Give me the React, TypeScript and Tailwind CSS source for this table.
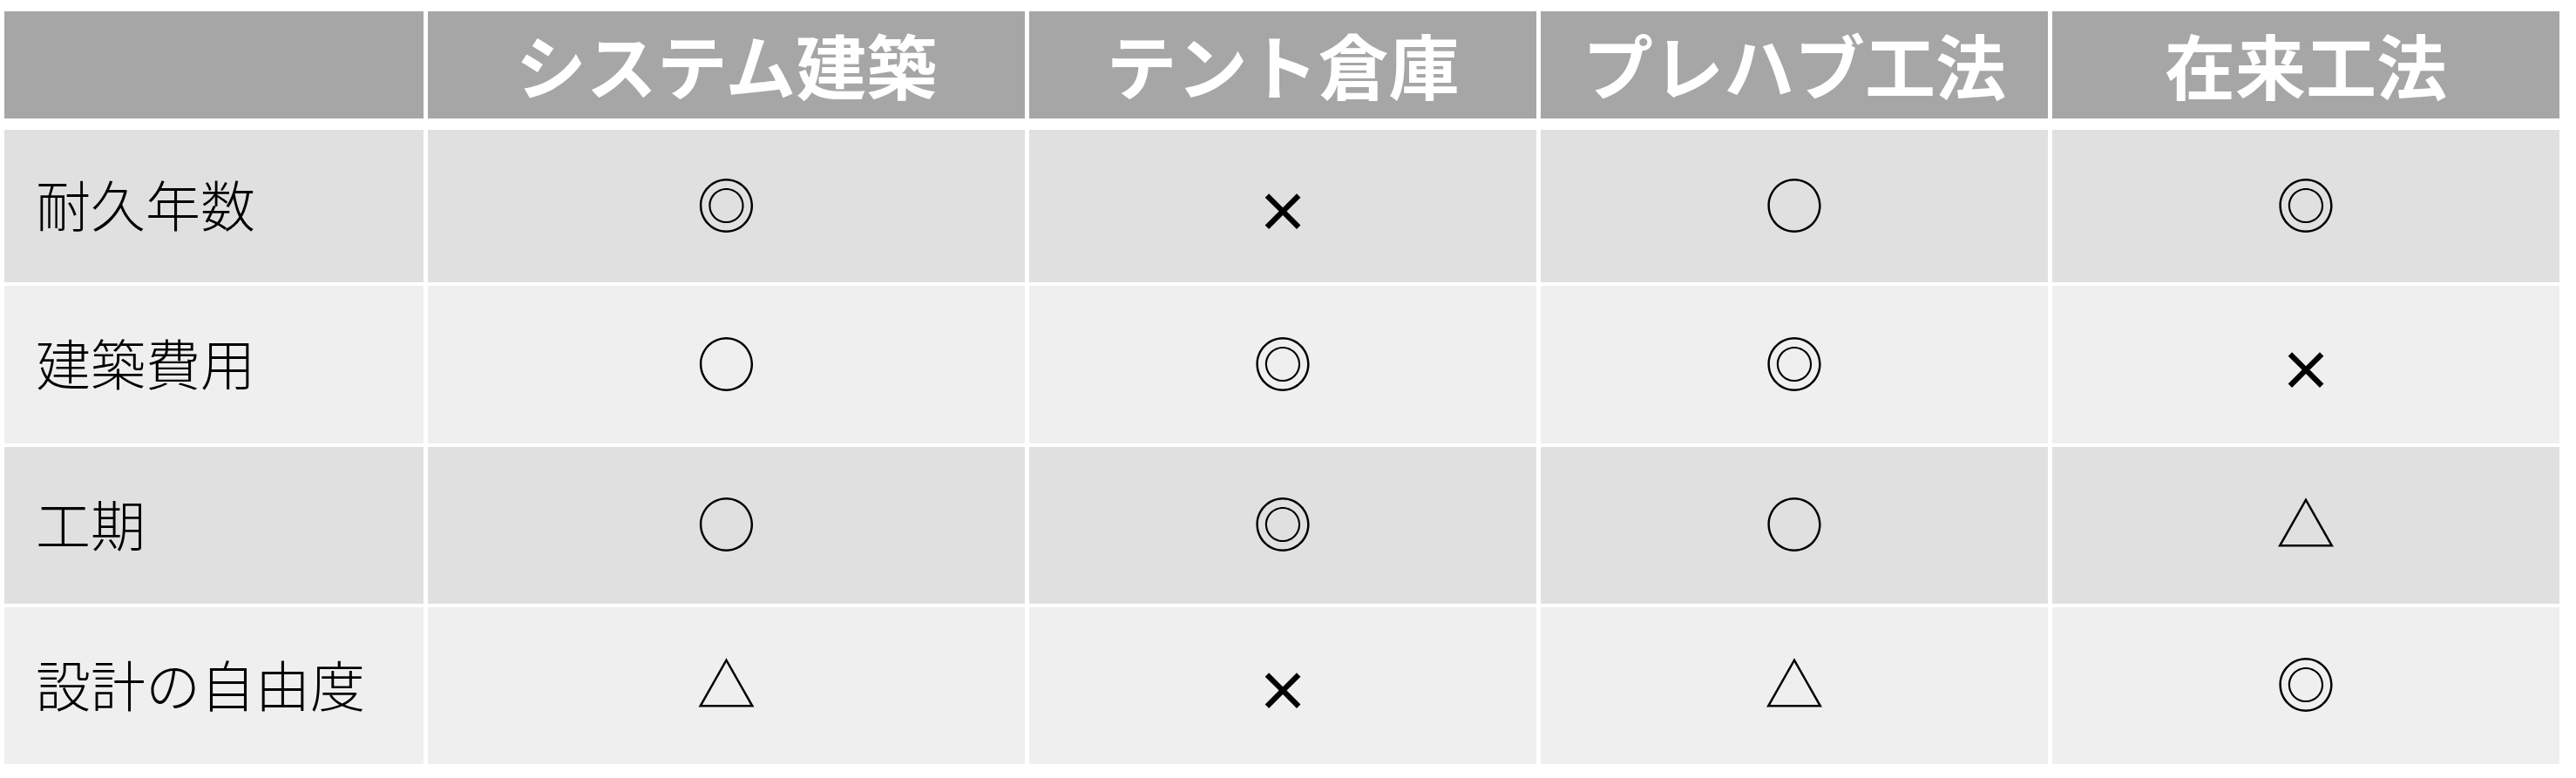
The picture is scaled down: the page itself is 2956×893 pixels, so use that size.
const cols = ["システム建築", "テント倉庫", "プレハブ工法", "在来工法"];

const rows = [
  { label: "耐久年数", marks: ["◎", "×", "○", "◎"], h: "h-[175px]", bg: "bg-[#e0e0e0]" },
  { label: "建築費用", marks: ["○", "◎", "◎", "×"], h: "h-[181px]", bg: "bg-[#efefef]" },
  { label: "工期", marks: ["○", "◎", "○", "△"], h: "h-[180px]", bg: "bg-[#e0e0e0]" },
  { label: "設計の自由度", marks: ["△", "×", "△", "◎"], h: "h-[180px]", bg: "bg-[#efefef]" },
];

const jp = "font-['Noto_Sans_CJK_JP','Noto_Sans',sans-serif]";

export default function App() {
  return (
    <div className={`min-h-[893px] w-[2956px] bg-white pl-[5px] pt-[13px] ${jp}`}>
      <div className="grid grid-cols-[481px_685px_582px_582px_582px] gap-x-[5px]">
        <div className="h-[123px] bg-[#a6a6a6]" />
        {cols.map((c) => (
          <div
            key={c}
            className="flex h-[123px] items-center justify-center bg-[#a6a6a6] pb-[4px] text-[81px] font-bold leading-none text-white"
          >
            {c}
          </div>
        ))}
      </div>

      <div className="mt-[13px] flex flex-col gap-y-[4px]">
        {rows.map((r) => (
          <div key={r.label} className="grid grid-cols-[481px_685px_582px_582px_582px] gap-x-[5px]">
            <div className={`flex items-center pb-[8px] pl-[36px] text-[63px] font-light leading-none text-black ${r.h} ${r.bg}`}>
              {r.label}
            </div>
            {r.marks.map((m, i) => (
              <div
                key={i}
                className={`flex items-center justify-center leading-none text-black ${r.h} ${r.bg} ${
                  m === "×" ? "pt-[6px] text-[62px] font-bold" : "pb-[8px] text-[68px]"
                }`}
              >
                {m}
              </div>
            ))}
          </div>
        ))}
      </div>
    </div>
  );
}
